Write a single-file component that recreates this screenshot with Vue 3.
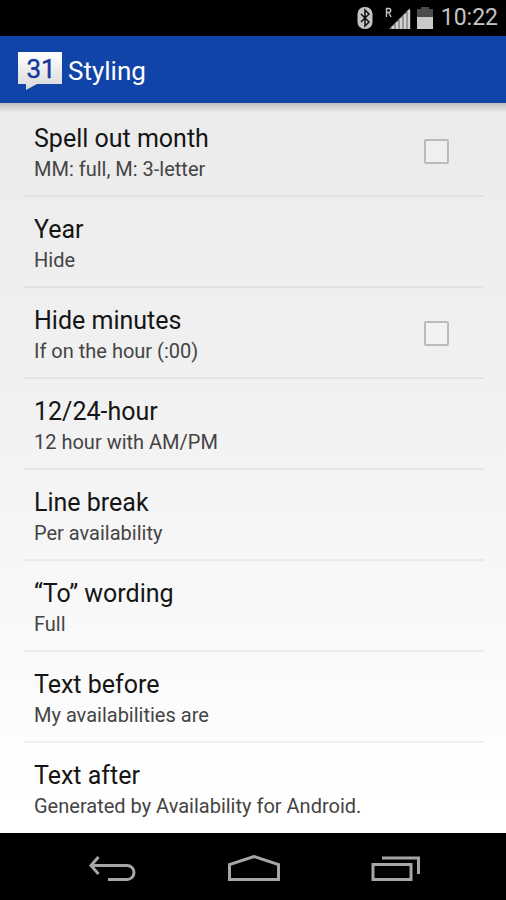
<!--
App.vue — Styling settings screen
Status bar, action bar, preference list, navigation bar
-->
<template>
  <div class="screen">
    <div class="status-bar">
      <svg class="bluetooth" width="16" height="22" viewBox="0 0 16 22">
        <rect x="0.5" y="0" width="15" height="22" rx="7" fill="#c4c4c4" />
        <path d="M4 7l8 8-4 4V3l4 4-8 8" fill="none" stroke="#111" stroke-width="1.5" />
      </svg>
      <svg class="signal" width="26" height="22" viewBox="0 0 26 22">
        <path d="M1.500 10V1.500h2.200a2 2 0 0 1 0 4H1.500M3.700 5.500L6 10" fill="none" stroke="#c4c4c4" stroke-width="1.4" />
        <path d="M4 22L25 1v21z" fill="#8a8a8a" />
        <path d="M8 22v-3M12 22v-7M16 22V11M20 22V7M24 22V3" stroke="#d2d2d2" stroke-width="2.4" />
      </svg>
      <svg class="battery" width="16" height="22" viewBox="0 0 16 22">
        <path d="M4 0h8v2h4v8H0V2h4z" fill="#4c4c4c" />
        <path d="M0 10h16v12H0z" fill="#cacaca" />
      </svg>
      <span class="clock">10:22</span>
    </div>

    <header class="action-bar">
      <svg class="logo" width="44" height="40" viewBox="0 0 44 40">
        <defs>
          <linearGradient id="bubble" x1="0" y1="0" x2="0" y2="1">
            <stop offset="0" stop-color="#ffffff" />
            <stop offset="1" stop-color="#d8d8d8" />
          </linearGradient>
        </defs>
        <path d="M0 2h44v32H19L8 40V34H0z" fill="url(#bubble)" />
        <text x="23" y="28" text-anchor="middle" class="logo-day">31</text>
      </svg>
      <h1 class="title">Styling</h1>
    </header>

    <main class="list">
      <component
        :is="item.check ? 'label' : 'button'"
        v-for="item in items"
        :key="item.title"
        class="row"
      >
        <span class="row-text">
          <span class="row-title">{{ item.title }}</span>
          <span class="row-summary">{{ item.summary }}</span>
        </span>
        <input v-if="item.check" v-model="item.checked" type="checkbox" class="row-check">
      </component>
    </main>

    <nav class="nav-bar">
      <button class="nav-btn" aria-label="Back">
        <svg width="48" height="28" viewBox="0 0 48 28">
          <path d="M9.500 2L2 10.500L9.500 19M2 10.500h36a7 7 0 0 1 0 14H19" fill="none" stroke="#a6a6a6" stroke-width="3" />
        </svg>
      </button>
      <button class="nav-btn" aria-label="Home">
        <svg width="54" height="28" viewBox="0 0 54 28">
          <path d="M2.500 24.500V9.500L27 1.500l24.500 8v15z" fill="none" stroke="#a6a6a6" stroke-width="3" />
        </svg>
      </button>
      <button class="nav-btn" aria-label="Recent apps">
        <svg width="50" height="28" viewBox="0 0 50 28">
          <path d="M2 9.500h38v15H2zM11 3h36.500v16" fill="none" stroke="#a6a6a6" stroke-width="3" />
        </svg>
      </button>
    </nav>
  </div>
</template>

<script setup>
import { ref } from 'vue'

const items = ref([
  { title: 'Spell out month', summary: 'MM: full, M: 3-letter', check: true, checked: false },
  { title: 'Year', summary: 'Hide' },
  { title: 'Hide minutes', summary: 'If on the hour (:00)', check: true, checked: false },
  { title: '12/24-hour', summary: '12 hour with AM/PM' },
  { title: 'Line break', summary: 'Per availability' },
  { title: '“To” wording', summary: 'Full' },
  { title: 'Text before', summary: 'My availabilities are' },
  { title: 'Text after', summary: 'Generated by Availability for Android.' }
])
</script>

<style>
body { background: #000; }
</style>

<style scoped>
.screen {
  display: flex; flex-direction: column; min-height: 100vh;
  font-family: Roboto, 'Liberation Sans', sans-serif;
}

/* status bar */
.status-bar {
  display: flex; align-items: center; justify-content: flex-end;
  height: 36px; padding-right: 8px; background: #000;
}
.signal { margin-left: 12px; }
.battery { margin-left: 6px; }
.clock { margin-left: 8px; font-size: 23px; line-height: 36px; color: #c4c4c4; }

/* action bar */
.action-bar {
  display: flex; align-items: center; gap: 6px;
  height: 67px; padding-left: 18px; background: #1144a8;
}
.logo-day { font-size: 26px; fill: #14399c; stroke: #14399c; stroke-width: 0.4; }
.title { margin: 0; padding-top: 2px; font-size: 26px; font-weight: 400; line-height: 32px; color: #fff; }

/* preference list */
.list {
  flex: 1; padding: 3px 22px 0 24px;
  background:
    linear-gradient(rgba(0,0,0,0.18), rgba(0,0,0,0)) top / 100% 10px no-repeat,
    linear-gradient(#ebebeb, #f1f1f1 40%, #ffffff 95%);
}
.row {
  display: flex; align-items: center; justify-content: space-between;
  box-sizing: border-box; width: 100%; height: 91px; padding: 2px 35px 0 10px;
  border: 0; border-bottom: 2px solid rgba(0,0,0,0.05);
  background: none; font-family: inherit; text-align: left;
}
.row:last-child { height: 90px; border-bottom: 0; }
.row-text { display: flex; flex-direction: column; padding-top: 2px; }
.row-title { font-size: 25px; line-height: 32px; color: #151515; }
.row-summary { font-size: 20px; line-height: 28px; color: #444; }
.row-check {
  appearance: none; width: 25px; height: 25px; margin: 0;
  border: 2px solid #bbb; border-radius: 2px;
  background: rgba(255,255,255,0.2);
}
.row-check:checked { background: #33b5e5; }

/* navigation bar */
.nav-bar {
  display: flex; justify-content: center; gap: 90px;
  height: 67px; padding-left: 4px; background: #000;
}
.nav-btn {
  display: flex; align-items: center;
  padding: 4px 0 0; border: 0; background: none;
}
</style>
